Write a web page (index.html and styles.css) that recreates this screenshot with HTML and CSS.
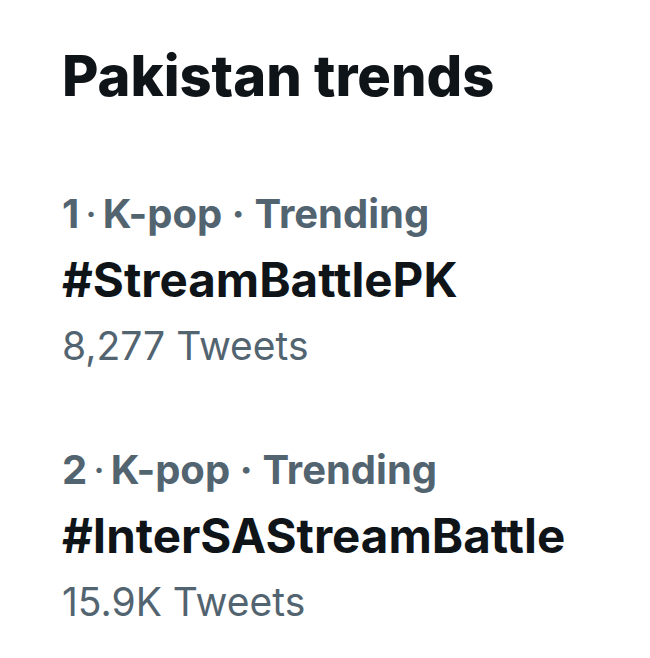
FILE: index.html
```html
<!DOCTYPE html>
<html lang="en">
<head>
  <meta charset="utf-8" />
  <meta name="viewport" content="width=device-width, initial-scale=1.0" />
  <title>Pakistan trends</title>
  <link rel="stylesheet" href="styles.css">
</head>
<body>
  <div class="trends">
    <h2 class="trends-title">Pakistan trends</h2>

    <div class="trend">
      <div class="trend-meta">1<span class="dot">·</span>K-pop · Trending</div>
      <div class="trend-name">#StreamBattlePK</div>
      <div class="trend-count">8,277 Tweets</div>
    </div>

    <div class="trend">
      <div class="trend-meta">2<span class="dot">·</span>K-pop · Trending</div>
      <div class="trend-name">#InterSAStreamBattle</div>
      <div class="trend-count">15.9K Tweets</div>
    </div>
  </div>
</body>
</html>
```

FILE: styles.css
```css
body {
  margin: 0;
  background: #fff;
  font-family: Inter, "Noto Sans", sans-serif;
}

.trends {
  padding: 38px 0 0 62px;
}

.trends-title {
  margin: 0 0 68px;
  font-size: 56px;
  line-height: 76px;
  font-weight: 800;
  color: #0f1419;
}

.trend {
  margin-bottom: 60px;
}

.trend:last-child {
  margin-bottom: 0;
}

.trend-meta {
  font-size: 40px;
  line-height: 64px;
  font-weight: 700;
  color: #536471;
}

.dot {
  margin: 0 6px;
  font-weight: 400;
}

.trend-name {
  font-size: 47.5px;
  line-height: 68px;
  font-weight: 700;
  color: #0f1419;
}

.trend-count {
  font-size: 39px;
  line-height: 64px;
  color: #536471;
}
```
